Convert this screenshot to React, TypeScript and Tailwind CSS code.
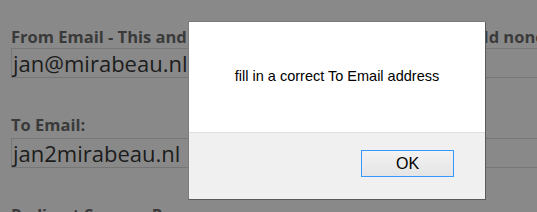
export default function App() {
  return (
    <div className="relative w-[537px] h-[212px] overflow-hidden bg-[#898989]">
      <div className="pl-[11px] pt-[26px] flex flex-col">
        <div className="h-[22px] leading-[22px] text-[16.5px] font-bold text-[#3a3a3a] whitespace-nowrap font-['Open_Sans',sans-serif]">
          From Email - This and the Reply To: email's address(es) field nonempty
        </div>
        <div className="h-[30px] w-[560px] border border-[#767676] flex items-center pl-[1px] text-[22px] text-[#1c1c1c] font-['Open_Sans',sans-serif]">
          jan@mirabeau.nl
        </div>
        <div className="mt-[36px] h-[22px] leading-[22px] text-[16.5px] font-bold text-[#3a3a3a] whitespace-nowrap font-['Open_Sans',sans-serif]">
          To Email:
        </div>
        <div className="mt-[2px] h-[30px] w-[560px] border border-[#767676] flex items-center pl-[1px] text-[22px] text-[#1c1c1c] font-['Open_Sans',sans-serif]">
          jan2mirabeau.nl
        </div>
        <div className="mt-[36px] h-[22px] leading-[22px] text-[16.5px] font-bold text-[#3a3a3a] whitespace-nowrap font-['Open_Sans',sans-serif]">
          Redirect Success Page
        </div>
      </div>
      <div className="absolute left-[188px] top-[21px] w-[298px] h-[179px] flex flex-col bg-white border-l border-t border-[#7c7c7c] border-r border-r-[#5a5a5a] border-b border-b-[#5a5a5a] rounded-tr-[2px] font-['Liberation_Sans',Arial,sans-serif]">
        <div className="h-[110px] flex items-center justify-center text-[14.5px] text-black">
          fill in a correct To Email address
        </div>
        <div className="flex-1 bg-[#f0f0f0] border-t border-[#dfdfdf] flex justify-end items-start pt-[17px] pr-[31px]">
          <button className="w-[93px] h-[27px] border border-[#3399ff] bg-gradient-to-b from-[#f2f2f2] to-[#e5e5e5] text-[16px] text-black flex items-center justify-center">
            OK
          </button>
        </div>
      </div>
    </div>
  );
}
